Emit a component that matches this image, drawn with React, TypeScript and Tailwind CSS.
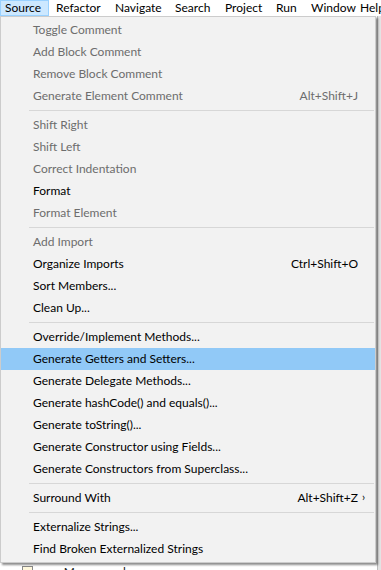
import React from "react";

type Item =
  | { sep: true }
  | { label: string; disabled?: boolean; shortcut?: string; sub?: boolean; active?: boolean };

const items: Item[] = [
  { label: "Toggle Comment", disabled: true },
  { label: "Add Block Comment", disabled: true },
  { label: "Remove Block Comment", disabled: true },
  { label: "Generate Element Comment", disabled: true, shortcut: "Alt+Shift+J" },
  { sep: true },
  { label: "Shift Right", disabled: true },
  { label: "Shift Left", disabled: true },
  { label: "Correct Indentation", disabled: true },
  { label: "Format" },
  { label: "Format Element", disabled: true },
  { sep: true },
  { label: "Add Import", disabled: true },
  { label: "Organize Imports", shortcut: "Ctrl+Shift+O" },
  { label: "Sort Members..." },
  { label: "Clean Up..." },
  { sep: true },
  { label: "Override/Implement Methods..." },
  { label: "Generate Getters and Setters...", active: true },
  { label: "Generate Delegate Methods..." },
  { label: "Generate hashCode() and equals()..." },
  { label: "Generate toString()..." },
  { label: "Generate Constructor using Fields..." },
  { label: "Generate Constructors from Superclass..." },
  { sep: true },
  { label: "Surround With", shortcut: "Alt+Shift+Z", sub: true },
  { sep: true },
  { label: "Externalize Strings..." },
  { label: "Find Broken Externalized Strings" },
];

// menu bar cells (widths taken from the screenshot)
const menus = [
  { name: "Refactor", w: "w-[59px]" },
  { name: "Navigate", w: "w-[60px]" },
  { name: "Search", w: "w-[50px]" },
  { name: "Project", w: "w-[51px]" },
  { name: "Run", w: "w-[35px]" },
  { name: "Window", w: "w-[49px]" },
  { name: "Help", w: "w-[40px]" },
];

export default function App() {
  return (
    <div
      className="relative w-[381px] h-[570px] overflow-hidden bg-white text-[12px] text-black"
      style={{ fontFamily: 'Lato, "Noto Sans", sans-serif' }}
    >
      {/* menu bar */}
      <div className="flex w-max h-4 items-center whitespace-nowrap leading-none">
        <div className="h-4 w-[49px] shrink-0 flex items-center pl-[4px] bg-[#cce8ff] border border-[#99d1ff]">
          Source
        </div>
        {menus.map((m) => (
          <div key={m.name} className={"h-4 shrink-0 pl-[7px] leading-4 overflow-visible " + m.w}>
            {m.name}
          </div>
        ))}
      </div>

      {/* editor behind the menu */}
      <div className="absolute right-0 top-[16px] w-[4px] h-[554px] bg-[#e3e3e3] border-l border-[#bdbdbd]" />
      <div className="absolute left-[22px] top-[563px] flex items-center gap-[4px] text-[#222]">
        <div className="w-[11px] h-[12px] border border-[#8a8a8a] bg-[#fff8dc]" />
        <span>user-Mapper.xml</span>
      </div>

      {/* popup menu */}
      <div className="absolute left-0 top-[16px] w-[376px] bg-[#f2f2f2] border border-[#cccccc] pt-[2px] pb-[2px] shadow-[2px_2px_2px_rgba(0,0,0,0.45)]">
        {items.map((it, i) =>
          "sep" in it ? (
            <div key={i} className="h-[7px] pt-[3px] pl-[28px] pr-[1px]">
              <div className="h-px bg-[#d7d7d7]" />
            </div>
          ) : (
            <div
              key={i}
              className={
                "flex h-[22px] items-center pl-[32px] pr-[17px] whitespace-nowrap " +
                (it.active ? "bg-[#91c9f7] " : "") +
                (it.disabled ? "text-[#6d6d6d]" : "text-black")
              }
            >
              <span className="flex-1">{it.label}</span>
              {it.shortcut && <span>{it.shortcut}</span>}
              {it.sub ? (
                <span className="w-0 relative">
                  <span className="absolute left-[4px] -top-[9px] text-[11px]">›</span>
                </span>
              ) : null}
            </div>
          )
        )}
      </div>
    </div>
  );
}
